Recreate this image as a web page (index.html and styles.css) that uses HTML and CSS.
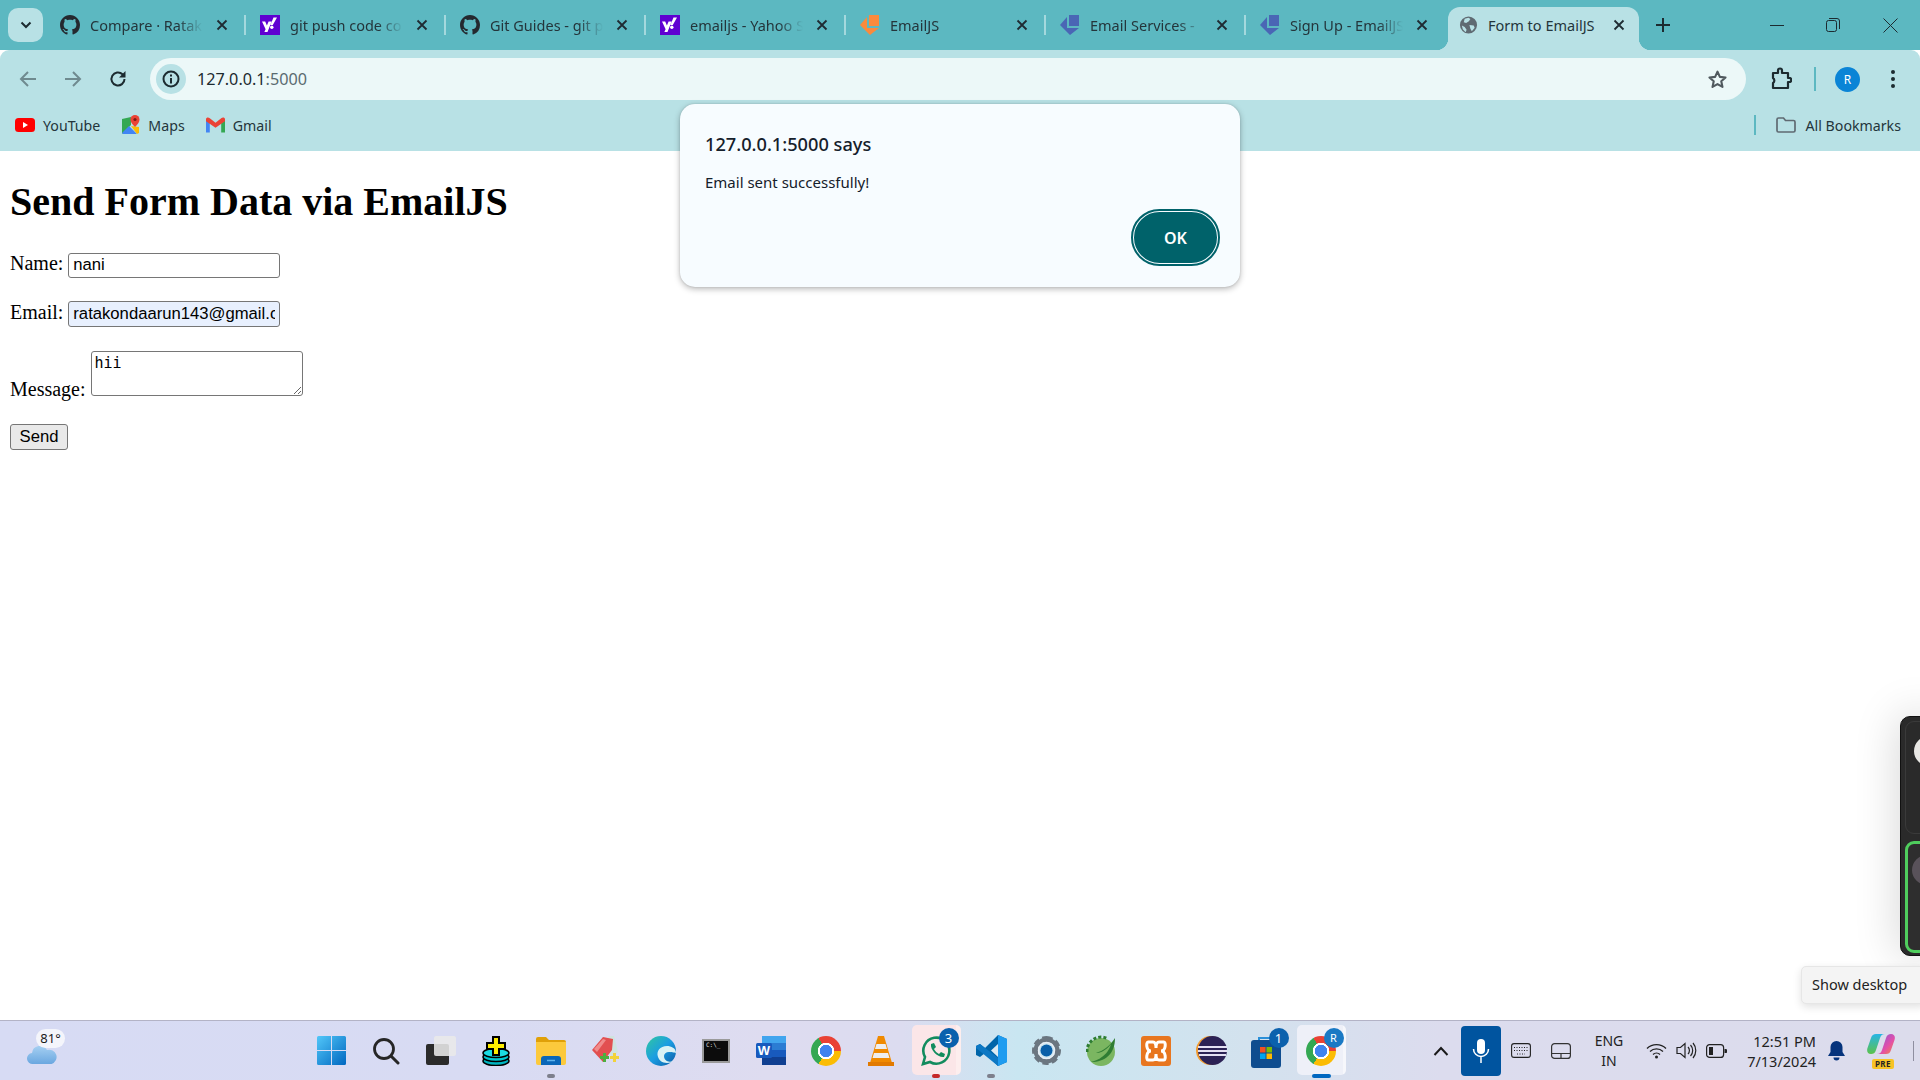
FILE: index.html
```html
<!DOCTYPE html>
<html lang="en">
<head>
    <meta charset="UTF-8">
    <title>Form to EmailJS</title>
    <link rel="stylesheet" href="styles.css">
</head>
<body>
    <svg class="defs" width="0" height="0">
        <symbol id="github" viewBox="0 0 16 16"><path fill="#24292f" d="M8 0C3.58 0 0 3.58 0 8c0 3.54 2.29 6.53 5.47 7.59.4.07.55-.17.55-.38 0-.19-.01-.82-.01-1.49-2.01.37-2.53-.49-2.69-.94-.09-.23-.48-.94-.82-1.13-.28-.15-.68-.52-.01-.53.63-.01 1.08.58 1.23.82.72 1.21 1.87.87 2.33.66.07-.52.28-.87.51-1.07-1.78-.2-3.64-.89-3.64-3.95 0-.87.31-1.59.82-2.15-.08-.2-.36-1.02.08-2.12 0 0 .67-.21 2.2.82.64-.18 1.32-.27 2-.27.68 0 1.36.09 2 .27 1.53-1.04 2.2-.82 2.2-.82.44 1.1.16 1.92.08 2.12.51.56.82 1.27.82 2.15 0 3.07-1.87 3.75-3.65 3.95.29.25.54.73.54 1.48 0 1.07-.01 1.93-.01 2.2 0 .21.15.46.55.38A8.013 8.013 0 0016 8c0-4.42-3.58-8-8-8z"/></symbol>
        <symbol id="yahoo" viewBox="0 0 20 20"><rect width="20" height="20" fill="#5f01d1"/><path fill="#fff" d="M2 6.500h3.200l1.700 4 1.700-4h3L7.500 17H4.400l1.200-2.800zM12.800 10h-2.400L13.500 2.500H17z"/><circle cx="11.800" cy="12.300" r="1.700" fill="#fff"/></symbol>
        <symbol id="emailjs" viewBox="0 0 20 20"><path d="M9 0h10v11H9z"/><path d="M7 2v11h12l-9 7-10-10z"/></symbol>
        <symbol id="close" viewBox="0 0 12 12"><path fill="none" stroke="#1f2c33" stroke-width="1.800" d="M1.500 1.500l9 9M10.500 1.500l-9 9"/></symbol>
    </svg>

    <div class="screen">
        <div class="tabstrip">
            <button class="tab-search">
                <svg width="12" height="8" viewBox="0 0 12 8"><path fill="none" stroke="#1c2b30" stroke-width="2" d="M1.500 1.500L6 6l4.500-4.500"/></svg>
            </button>
            <div class="tab">
                <svg class="favicon"><use href="#github"/></svg>
                <span class="tab-title">Compare · Ratak</span>
                <svg class="tab-close"><use href="#close"/></svg>
            </div>
            <div class="tab">
                <svg class="favicon"><use href="#yahoo"/></svg>
                <span class="tab-title">git push code co</span>
                <svg class="tab-close"><use href="#close"/></svg>
            </div>
            <div class="tab">
                <svg class="favicon"><use href="#github"/></svg>
                <span class="tab-title">Git Guides - git p</span>
                <svg class="tab-close"><use href="#close"/></svg>
            </div>
            <div class="tab">
                <svg class="favicon"><use href="#yahoo"/></svg>
                <span class="tab-title">emailjs - Yahoo S</span>
                <svg class="tab-close"><use href="#close"/></svg>
            </div>
            <div class="tab">
                <svg class="favicon ejs-orange"><use href="#emailjs"/></svg>
                <span class="tab-title">EmailJS</span>
                <svg class="tab-close"><use href="#close"/></svg>
            </div>
            <div class="tab">
                <svg class="favicon ejs-blue"><use href="#emailjs"/></svg>
                <span class="tab-title">Email Services -</span>
                <svg class="tab-close"><use href="#close"/></svg>
            </div>
            <div class="tab tab-before-active">
                <svg class="favicon ejs-blue"><use href="#emailjs"/></svg>
                <span class="tab-title">Sign Up - EmailJS</span>
                <svg class="tab-close"><use href="#close"/></svg>
            </div>
            <div class="tab tab-active">
                <svg class="favicon" viewBox="0 0 20 20"><circle cx="10" cy="10" r="9" fill="#5f6a72"/><path fill="#b8e1e5" d="M6 3.500l4-1.200 2 1.400-1.600 2.400L7.500 8 5 7zM11 10l4.500.5 1 2.500-3 3.500-1.500-2.500zM3 10.500l3 1.500 2 3-1 2.500-3-3z"/></svg>
                <span class="tab-title">Form to EmailJS</span>
                <svg class="tab-close"><use href="#close"/></svg>
            </div>
            <svg class="new-tab" width="16" height="16" viewBox="0 0 16 16"><path fill="none" stroke="#1c2b30" stroke-width="2" d="M8 1v14M1 8h14"/></svg>
            <div class="window-controls">
                <span class="win-btn"><svg width="14" height="14" viewBox="0 0 14 14"><path stroke="#1c2b30" d="M0 7.500h14"/></svg></span>
                <span class="win-btn"><svg width="14" height="14" viewBox="0 0 14 14"><rect x=".5" y="2.500" width="10" height="11" rx="2" fill="none" stroke="#1c2b30"/><path fill="none" stroke="#1c2b30" d="M3 .5h8a2.500 2.500 0 0 1 2.500 2.500v8"/></svg></span>
                <span class="win-btn win-close"><svg width="15" height="15" viewBox="0 0 15 15"><path fill="none" stroke="#1c2b30" d="M.5.5l14 14M14.500.5l-14 14"/></svg></span>
            </div>
        </div>

        <div class="toolbar">
            <span class="nav-btn"><svg width="18" height="18" viewBox="0 0 18 18"><path fill="none" stroke="#6f8a8f" stroke-width="2" d="M17 9H2M9 2L2 9l7 7"/></svg></span>
            <span class="nav-btn"><svg width="18" height="18" viewBox="0 0 18 18"><path fill="none" stroke="#6f8a8f" stroke-width="2" d="M1 9h15M9 2l7 7-7 7"/></svg></span>
            <span class="nav-btn"><svg width="18" height="18" viewBox="0 0 18 18"><path fill="none" stroke="#1c2b30" stroke-width="2" d="M15.500 9a6.500 6.500 0 1 1-2-4.700L15.500 6"/><path fill="#1c2b30" d="M16.500 1v6.500H10z"/></svg></span>
            <div class="omnibox">
                <span class="site-info"><svg width="18" height="18" viewBox="0 0 18 18"><circle cx="9" cy="9" r="7.500" fill="none" stroke="#1c2b30" stroke-width="2"/><path stroke="#1c2b30" stroke-width="2" d="M9 8v5.500M9 4.500v2"/></svg></span>
                <span class="url">127.0.0.1<span class="url-port">:5000</span></span>
                <svg class="star" width="21" height="21" viewBox="0 0 24 24"><path fill="none" stroke="#50595e" stroke-width="2.400" stroke-linejoin="round" d="M12 3l2.700 6 6.500.7-4.900 4.400 1.400 6.400L12 17.200l-5.700 3.300 1.400-6.400-4.900-4.400 6.500-.7z"/></svg>
            </div>
            <span class="tool-btn extensions"><svg width="22" height="24" viewBox="0 0 22 24"><path fill="none" stroke="#1c2b30" stroke-width="2.200" stroke-linejoin="round" d="M3 6h5V3.500a2 2 0 0 1 4 0V6h6v5h2a2.200 2.200 0 0 1 0 4h-2v6H3v-5a3 3 0 0 0 0-5z"/></svg></span>
            <span class="tool-divider"></span>
            <span class="avatar">R</span>
            <span class="tool-btn menu"><i></i><i></i><i></i></span>
        </div>

        <div class="bookmarks">
            <span class="bookmark">
                <svg width="20" height="20" viewBox="0 0 20 20"><rect y="3" width="20" height="14" rx="3.500" fill="#f00"/><path fill="#fff" d="M8 7l5 3-5 3z"/></svg>
                YouTube
            </span>
            <span class="bookmark">
                <svg width="19" height="20" viewBox="0 0 19 20"><path fill="#34a853" d="M1 4l9-2v8l-9 9z"/><path fill="#4285f4" d="M1 18l7-7 8 8H2z"/><path fill="#fbbc04" d="M10 11l6 8 2-1V12z"/><path fill="#ea4335" d="M14 0a4.500 4.500 0 0 1 4.500 4.500C18.500 8 14 12 14 12S9.500 8 9.500 4.500A4.500 4.500 0 0 1 14 0z"/><circle cx="14" cy="4.500" r="1.600" fill="#7b1c14"/></svg>
                Maps
            </span>
            <span class="bookmark">
                <svg width="19" height="16" viewBox="0 0 20 16"><path fill="#4285f4" d="M0 3v13h4V6z"/><path fill="#34a853" d="M16 6v10h4V3z"/><path fill="#ea4335" d="M0 1.500C1-.5 3 0 4 1l6 4.500L16 1c1-1 3-1.500 4 .5V4l-10 7L0 4z"/></svg>
                Gmail
            </span>
            <span class="bookmarks-end">
                <span class="bookmarks-divider"></span>
                <span class="bookmark">
                    <svg width="20" height="16" viewBox="0 0 20 16"><path fill="none" stroke="#5f6a72" stroke-width="1.700" d="M1 2.500A1.500 1.500 0 0 1 2.500 1h5l2 2.500h8A1.500 1.500 0 0 1 19 5v8.500a1.500 1.500 0 0 1-1.500 1.500h-15A1.500 1.500 0 0 1 1 13.500z"/></svg>
                    All Bookmarks
                </span>
            </span>
        </div>

        <main class="page">
            <h1>Send Form Data via EmailJS</h1>
            <form>
                <div class="form-row">
                    <label for="name">Name:</label>
                    <input id="name" type="text" value="nani">
                </div>
                <div class="form-row form-row-email">
                    <label for="email">Email:</label>
                    <input id="email" class="autofilled" type="email" value="ratakondaarun143@gmail.com">
                </div>
                <div class="form-row form-row-message">
                    <label for="message">Message:</label>
                    <textarea id="message">hii</textarea>
                </div>
                <button type="button" class="send-btn">Send</button>
            </form>
        </main>

        <div class="taskbar">
            <div class="weather">
                <svg width="30" height="22" viewBox="0 0 30 22"><defs><linearGradient id="cloud" x1="0" y1="0" x2="0" y2="1"><stop offset="0" stop-color="#a6d0f2"/><stop offset="1" stop-color="#6aa7e0"/></linearGradient></defs><path fill="url(#cloud)" d="M6 21a5.500 5.500 0 0 1-1-11A8 8 0 0 1 20 7a6 6 0 0 1 4.500 14z"/></svg>
                <span class="temp">81°</span>
            </div>
            <div class="tasklist">
                <span class="task">
                    <svg width="29" height="29" viewBox="0 0 29 29"><defs><linearGradient id="win" x1="0" y1="0" x2="1" y2="1"><stop offset="0" stop-color="#52c7f9"/><stop offset="1" stop-color="#0067c0"/></linearGradient></defs><path fill="url(#win)" d="M0 1.500A1.500 1.500 0 0 1 1.500 0H14v14H0zM15 0h12.500A1.500 1.500 0 0 1 29 1.500V14H15zM0 15h14v14H1.500A1.500 1.500 0 0 1 0 27.500zM15 15h14v12.500a1.500 1.500 0 0 1-1.500 1.500H15z"/></svg>
                </span>
                <span class="task">
                    <svg width="28" height="28" viewBox="0 0 28 28"><circle cx="12" cy="12" r="9.500" fill="none" stroke="#262626" stroke-width="2.800"/><path stroke="#262626" stroke-width="3" stroke-linecap="round" d="M19 19l7 7"/></svg>
                </span>
                <span class="task">
                    <svg width="30" height="29" viewBox="0 0 30 29"><rect y="8" width="23" height="21" rx="2" fill="#2b2b2b"/><rect x="8" width="22" height="20" rx="2" fill="#e9e9e9" fill-opacity=".88"/></svg>
                </span>
                <span class="task">
                    <svg width="28" height="30" viewBox="0 0 28 30"><ellipse cx="14" cy="25" rx="13" ry="4.500" fill="#00b5c0" stroke="#000" stroke-width="1.500"/><ellipse cx="14" cy="21" rx="13" ry="4.500" fill="#00c9d4" stroke="#000" stroke-width="1.500"/><ellipse cx="14" cy="17" rx="13" ry="4.500" fill="#1bdbe3" stroke="#000" stroke-width="1.500"/><path fill="#ffec00" stroke="#000" stroke-width="2" d="M11 1h6v6h6v6h-6v6h-6v-6H5V7h6z"/></svg>
                </span>
                <span class="task">
                    <svg width="30" height="28" viewBox="0 0 30 28"><path fill="#e0a008" d="M0 2a2 2 0 0 1 2-2h8l3 3h15a2 2 0 0 1 2 2v5H0z"/><path fill="#fcc93c" d="M0 5h30v21a2 2 0 0 1-2 2H2a2 2 0 0 1-2-2z"/><path fill="#0a66b8" d="M5 28v-6a3 3 0 0 1 3-3h14a3 3 0 0 1 3 3v6z"/><path stroke="#5db2ec" stroke-width="1.500" d="M11 23.500h8"/></svg>
                    <i class="task-dot"></i>
                </span>
                <span class="task">
                    <svg width="28" height="30" viewBox="0 0 28 30"><path fill="#cfe3df" d="M17 0h5l4 16-6 6-6-17z"/><path fill="#e24f50" d="M0 14L11 1l10 2-1 11-9 12z"/><path fill="#f08b8b" d="M2 13l9-10 3 1-9 12z"/><path fill="#4caf3e" d="M8 20h3v-3h3v3h3v3h-3v3h-3v-3H8z"/><path fill="#f2d23a" d="M18 20h3v-3h3v3h3v3h-3v3h-3v-3h-3z"/></svg>
                </span>
                <span class="task">
                    <svg width="30" height="30" viewBox="0 0 30 30"><defs><linearGradient id="edge" x1="0" y1="0" x2="1" y2="1"><stop offset="0" stop-color="#30c8a0"/><stop offset=".5" stop-color="#1b9de2"/><stop offset="1" stop-color="#0c59a4"/></linearGradient></defs><circle cx="15" cy="15" r="15" fill="url(#edge)"/><path fill="#d9f2f5" d="M30 17c0-5-5-7-9-7-7 0-11 5-9 11 1 3 4 6 9 6 3 0 5-1 6-2-5 2-9-1-9-5 0-2 2-4 5-4 3 0 7 1 7 1z"/></svg>
                </span>
                <span class="task">
                    <span class="cmd-window">C:\_</span>
                </span>
                <span class="task">
                    <svg width="30" height="29" viewBox="0 0 30 29"><rect x="6" width="24" height="29" rx="2" fill="#2b7cd3"/><rect x="6" width="24" height="7" fill="#41a5ee"/><rect x="6" y="14" width="24" height="7" fill="#185abd"/><rect x="6" y="21" width="24" height="8" fill="#103f91"/><rect y="7" width="16" height="15" rx="1.500" fill="#185abd"/><text x="8" y="19" text-anchor="middle" class="word-w">W</text></svg>
                </span>
                <span class="task"><span class="chrome"></span></span>
                <span class="task">
                    <svg width="26" height="30" viewBox="0 0 26 30"><path fill="#f08a00" d="M10 0h6l8 27H2z"/><path fill="#eee" d="M8.500 8h9l1.500 5H7zM6 17h14l1.500 5h-17z"/><path fill="#e27a00" d="M0 26h26v4H0z"/></svg>
                </span>
                <span class="task task-open task-alert">
                    <svg width="30" height="30" viewBox="0 0 30 30"><path fill="none" stroke="#128c5e" stroke-width="2.600" d="M2 28l2-7a13 13 0 1 1 5 5z"/><path fill="#128c5e" d="M10 8l3-1 2 4-2 2c1 2 3 4 5 5l2-2 4 2-1 3c-6 1-14-7-13-13z"/></svg>
                    <b class="badge">3</b>
                    <i class="task-dot dot-red"></i>
                </span>
                <span class="task">
                    <svg width="31" height="31" viewBox="0 0 31 31"><path fill="#0065a9" d="M22 0l9 4v23l-9 4-13-13-5 4-4-2V11l4-2 5 4z"/><path fill="#1f9cf0" d="M22 0l9 4v23l-9 4z"/><path fill="#dceaf2" d="M22 9l-7 6.500 7 6.500z"/><path fill="#0d78c4" d="M4 9l18 14v8L0 13v-2z"/></svg>
                    <i class="task-dot"></i>
                </span>
                <span class="task">
                    <svg width="31" height="31" viewBox="0 0 31 31"><path fill="none" stroke="#6b7680" stroke-width="6" stroke-dasharray="5.500 3" d="M15.500 4a11.500 11.500 0 1 1 0 23 11.500 11.500 0 0 1 0-23z"/><circle cx="15.500" cy="15.500" r="11" fill="none" stroke="#6b7680" stroke-width="4"/><circle cx="15.500" cy="15.500" r="6" fill="#0a5fa8"/><circle cx="15.500" cy="15.500" r="8" fill="none" stroke="#e9eef4" stroke-width="1.500"/></svg>
                </span>
                <span class="task">
                    <svg width="30" height="31" viewBox="0 0 30 31"><circle cx="15" cy="17" r="14" fill="#7bb661"/><path fill="none" stroke="#2e7d32" stroke-width="3" stroke-dasharray="3 2" d="M1 17A14 14 0 0 1 22 4"/><path fill="#2f7d33" d="M29 3c0 16-10 24-24 24 0 0 16-3 20-18-6 8-12 9-15 9 7-2 14-7 19-15z"/></svg>
                </span>
                <span class="task">
                    <svg width="30" height="30" viewBox="0 0 30 30"><rect width="30" height="30" rx="3" fill="#e8761f"/><path fill="none" stroke="#fff" stroke-width="3" d="M7 6h5c3 0 3 6 3 6s0-6 3-6h5c2 0 2 9-3 9 5 0 5 9 3 9h-5c-3 0-3-6-3-6s0 6-3 6H7c-2 0-2-9 3-9-5 0-5-9-3-9z"/></svg>
                </span>
                <span class="task">
                    <svg width="31" height="31" viewBox="0 0 31 31"><circle cx="14.500" cy="15.500" r="14.500" fill="#f29b30"/><circle cx="16.500" cy="15.500" r="14.500" fill="#2c2255"/><path stroke="#e4e0f2" stroke-width="2.200" d="M2 12h29M2 16h29M3 20h27"/></svg>
                </span>
                <span class="task">
                    <svg width="30" height="34" viewBox="0 0 30 34"><path fill="none" stroke="#2a8fd8" stroke-width="2" d="M8 8V4h14v4"/><rect y="6" width="30" height="28" rx="3" fill="#0f4d8f"/><path fill="#f25022" d="M9 13h5.500v5.500H9z"/><path fill="#7fba00" d="M15.500 13H21v5.500h-5.500z"/><path fill="#00a4ef" d="M9 19.500h5.500V25H9z"/><path fill="#ffb900" d="M15.500 19.500H21V25h-5.500z"/></svg>
                    <b class="badge">1</b>
                </span>
                <span class="task task-open">
                    <span class="chrome"></span>
                    <b class="badge badge-light">R</b>
                    <i class="task-dot dot-blue"></i>
                </span>
            </div>
            <div class="tray">
                <span class="tray-item">
                    <svg width="16" height="10" viewBox="0 0 16 10"><path fill="none" stroke="#1a1a1a" stroke-width="2" d="M1.500 9L8 2l6.500 7"/></svg>
                </span>
                <span class="mic">
                    <svg width="18" height="26" viewBox="0 0 18 26"><rect x="5" y="1" width="8" height="15" rx="4" fill="#fff"/><path fill="none" stroke="#fff" stroke-width="1.500" d="M1.500 11a7.500 7.500 0 0 0 15 0M9 18.500V25"/></svg>
                </span>
                <span class="tray-item">
                    <svg width="20" height="15" viewBox="0 0 20 15"><rect x=".6" y=".6" width="18.800" height="13.800" rx="2.500" fill="none" stroke="#222" stroke-width="1.100"/><path stroke="#222" stroke-dasharray="1 1.500" d="M3 4.500h14M3 7.500h14M6 11h8"/></svg>
                </span>
                <span class="tray-item">
                    <svg width="20" height="16" viewBox="0 0 20 16"><rect x=".6" y=".6" width="18.800" height="14.800" rx="3" fill="none" stroke="#333" stroke-width="1.200"/><path stroke="#333" stroke-width="1.200" d="M1 10.500h18M10 10.500V15"/></svg>
                </span>
                <span class="lang">ENG<br>IN</span>
                <span class="tray-item tray-status">
                    <svg width="21" height="16" viewBox="0 0 21 16"><path fill="none" stroke="#222" stroke-width="1.300" d="M1 5.500a13.500 13.500 0 0 1 19 0M4 8.500a9.500 9.500 0 0 1 13 0M7 11.500a5 5 0 0 1 7 0"/><circle cx="10.500" cy="14" r="1.500" fill="#222"/></svg>
                </span>
                <span class="tray-item tray-status">
                    <svg width="21" height="17" viewBox="0 0 21 17"><path fill="none" stroke="#222" stroke-width="1.200" d="M1 5.500h3.500L9 1.500v14l-4.500-4H1zM12 5a5 5 0 0 1 0 7M14.500 3a8 8 0 0 1 0 11M17 1a11.500 11.500 0 0 1 0 15"/></svg>
                </span>
                <span class="tray-item tray-status">
                    <svg width="21" height="14" viewBox="0 0 21 14"><rect x=".6" y=".6" width="17" height="12.800" rx="3" fill="none" stroke="#222" stroke-width="1.200"/><rect x="3" y="3" width="4" height="8" fill="#222"/><path fill="#222" d="M18.500 5h1a1.500 1.500 0 0 1 0 4h-1z"/></svg>
                </span>
                <span class="clock">12:51 PM<br>7/13/2024</span>
                <span class="tray-item bell">
                    <svg width="17" height="20" viewBox="0 0 17 20"><path fill="#05337c" d="M8.500 0a6 6 0 0 1 6 6v5l2.500 4H0l2.500-4V6a6 6 0 0 1 6-6zM5.500 16.500h6a3 3 0 0 1-6 0z"/></svg>
                </span>
                <span class="copilot">
                    <svg width="28" height="24" viewBox="0 0 28 24"><defs><linearGradient id="copilot-l" x1="0" y1="0" x2="0" y2="1"><stop offset="0" stop-color="#27b5e6"/><stop offset="1" stop-color="#5cc24a"/></linearGradient><linearGradient id="copilot-r" x1="0" y1="0" x2="1" y2="1"><stop offset="0" stop-color="#7a5be0"/><stop offset=".6" stop-color="#e34fa8"/><stop offset="1" stop-color="#f28a3c"/></linearGradient></defs><path fill="url(#copilot-l)" d="M9 0h9c-3 0-4 1.500-5 4l-4 12c-1 3-2.500 4-5 4-3.500 0-4.500-3-3.500-6L4 4c1-3 2.500-4 5-4z"/><path fill="url(#copilot-r)" d="M19 20h-9c3 0 4-1.500 5-4l4-12c1-3 2.500-4 5-4 3.500 0 4.500 3 3.500 6L24 16c-1 3-2.500 4-5 4z"/></svg>
                    <b class="pre">PRE</b>
                </span>
                <span class="tray-divider"></span>
            </div>
        </div>

        <!-- JS alert box, sits over toolbar and page -->
        <div class="alert-box">
            <h2>127.0.0.1:5000 says</h2>
            <p>Email sent successfully!</p>
            <div class="alert-actions">
                <button type="button" class="ok-btn">OK</button>
            </div>
        </div>

        <!-- meeting window peeking in from the right edge -->
        <div class="call-panel">
            <div class="call-tile"><span class="call-face"></span></div>
            <div class="call-tile call-tile-active"><span class="call-face call-face-dark"></span></div>
        </div>
        <div class="desktop-tip">Show desktop</div>
    </div>
</body>
</html>
```

FILE: styles.css
```css
* {
    box-sizing: border-box;
}

html, body {
    margin: 0;
    padding: 0;
    height: 100%;
    overflow: hidden;
}

body {
    font-family: "Noto Sans", "Open Sans", sans-serif;
    color: #1f2c33;
}

.defs {
    position: absolute;
}

.screen {
    position: relative;
    display: flex;
    flex-direction: column;
    width: 1920px;
    height: 1080px;
    overflow: hidden;
    background: #fff;
}

/* tab strip */
.tabstrip {
    display: flex;
    align-items: center;
    height: 50px;
    padding-left: 8px;
    background: #5cb8c1;
}

.tab-search {
    display: flex;
    align-items: center;
    justify-content: center;
    flex: none;
    width: 35px;
    height: 34px;
    margin-right: 3px;
    border: none;
    border-radius: 10px;
    background: #b8e1e5;
}

.tab {
    position: relative;
    display: flex;
    align-items: center;
    flex: none;
    width: 200px;
    height: 50px;
    padding-left: 14px;
}

.tab::after {
    content: "";
    position: absolute;
    right: 0;
    top: 15px;
    width: 2px;
    height: 20px;
    background: #a4d8dd;
}

.tab-before-active::after,
.tab-active::after {
    display: none;
}

.favicon {
    flex: none;
    width: 20px;
    height: 20px;
    margin-right: 10px;
}

.ejs-orange {
    fill: #fb8a3c;
}

.ejs-blue {
    fill: #4a66b5;
}

.tab-title {
    flex: none;
    width: 113px;
    overflow: hidden;
    white-space: nowrap;
    font-size: 14.500px;
    color: #24353b;
    -webkit-mask-image: linear-gradient(90deg, #000 78%, transparent 100%);
    mask-image: linear-gradient(90deg, #000 78%, transparent 100%);
}

.tab-close {
    flex: none;
    width: 12px;
    height: 12px;
    margin-left: 13px;
}

.tab-active {
    width: 191px;
    height: 43px;
    margin: 7px 0 0 2px;
    padding: 0 0 7px 11px;
    border-radius: 12px 12px 0 0;
    background: #b8e1e5;
}

.tab-active::before {
    content: "";
    position: absolute;
    left: -12px;
    right: -12px;
    bottom: 0;
    height: 12px;
    background:
        radial-gradient(circle at 0 0, #5cb8c1 12px, #b8e1e5 12.500px) left / 12px 12px no-repeat,
        radial-gradient(circle at 100% 0, #5cb8c1 12px, #b8e1e5 12.500px) right / 12px 12px no-repeat;
}

.tab-active .favicon {
    width: 19px;
    margin-right: 10px;
}

.tab-active .tab-title {
    width: 120px;
    -webkit-mask-image: none;
    mask-image: none;
}

.tab-active .tab-close {
    margin-left: 5px;
}

.new-tab {
    flex: none;
    margin-left: 16px;
}

.window-controls {
    display: flex;
    margin-left: auto;
}

.win-btn {
    display: flex;
    align-items: center;
    justify-content: center;
    width: 56px;
    height: 40px;
}

.win-close {
    width: 59px;
}

/* toolbar */
.toolbar {
    display: flex;
    align-items: center;
    height: 50px;
    padding: 8px 0 0 5px;
    border-radius: 9px 9px 0 0;
    background: #b8e1e5;
}

.nav-btn {
    display: flex;
    align-items: center;
    justify-content: center;
    flex: none;
    width: 45px;
    height: 42px;
}

.omnibox {
    display: flex;
    align-items: center;
    flex: none;
    width: 1596px;
    height: 42px;
    margin-left: 10px;
    padding: 0 18px 0 6px;
    border-radius: 21px;
    background: #ecf8f8;
}

.site-info {
    display: flex;
    align-items: center;
    justify-content: center;
    flex: none;
    width: 30px;
    height: 30px;
    border-radius: 50%;
    background: #b8e1e5;
}

.url {
    margin-left: 11px;
    font-size: 16.200px;
    color: #1c2b30;
}

.url-port {
    color: #5a6b70;
}

.star {
    margin-left: auto;
}

.tool-btn {
    display: flex;
    align-items: center;
    justify-content: center;
    flex: none;
}

.extensions {
    width: 70px;
}

.tool-divider {
    flex: none;
    width: 2px;
    height: 24px;
    margin: 0 19px 0 -2px;
    background: #5cb8c1;
}

.avatar {
    display: flex;
    align-items: center;
    justify-content: center;
    flex: none;
    width: 25px;
    height: 25px;
    border-radius: 50%;
    background: #0a84d6;
    color: #fff;
    font-size: 12px;
}

.menu {
    flex-direction: column;
    gap: 3px;
    width: 40px;
    margin-left: 13px;
}

.menu i {
    width: 4px;
    height: 4px;
    border-radius: 50%;
    background: #1c2b30;
}

/* bookmarks bar */
.bookmarks {
    display: flex;
    align-items: center;
    height: 51px;
    padding: 0 19px 1px 15px;
    background: #b8e1e5;
    font-size: 14.200px;
    color: #24353b;
}

.bookmark {
    display: flex;
    align-items: center;
    gap: 8px;
    margin-right: 21px;
    white-space: nowrap;
}

.bookmarks-end {
    display: flex;
    align-items: center;
    margin-left: auto;
}

.bookmarks-end .bookmark {
    gap: 10px;
    margin-right: 0;
}

.bookmarks-divider {
    width: 2px;
    height: 20px;
    margin-right: 20px;
    background: #5cb8c1;
}

/* page content, zoomed 125% like the capture */
.page {
    flex: 1;
    padding: 0 10px;
    font-family: "Liberation Serif", serif;
    font-size: 20px;
    color: #000;
}

.page h1 {
    margin: 28px 0 27px;
    font-size: 40px;
    line-height: 46px;
    font-weight: bold;
}

.form-row {
    margin-bottom: 23px;
}

.form-row-email {
    margin-bottom: 24px;
}

.form-row input,
.form-row textarea {
    box-sizing: border-box;
    width: 212px;
    border: 1px solid #767676;
    border-radius: 3px;
    background: #fff;
    color: #000;
}

.form-row input {
    height: 25px;
    padding: 1px 4px;
    font-family: "Liberation Sans", sans-serif;
    font-size: 16.670px;
}

.form-row .autofilled {
    height: 26px;
    background: #e8f0fe;
}

.form-row textarea {
    height: 45px;
    padding: 2px 3px;
    font-family: "DejaVu Sans Mono", monospace;
    font-size: 15px;
    resize: both;
}

.form-row-message {
    margin-bottom: 23px;
}

.send-btn {
    display: block;
    width: 58px;
    height: 26px;
    padding: 0;
    border: 1px solid #767676;
    border-radius: 3px;
    background: #e9e9e9;
    font-family: "Liberation Sans", sans-serif;
    font-size: 16.670px;
    color: #000;
}

/* windows taskbar */
.taskbar {
    display: flex;
    align-items: center;
    flex: none;
    height: 60px;
    border-top: 1px solid #b3b3c6;
    background: linear-gradient(90deg, #d7dbf4 0%, #d8dbf3 25%, #dedcf0 40%, #dcdcf0 47%, #c9e6f1 53%, #d3e2ee 65%, #dcdcee 75%, #dcdcec 100%);
}

.weather {
    position: relative;
    flex: none;
    width: 303.500px;
    height: 59px;
}

.weather svg {
    position: absolute;
    left: 27px;
    top: 22px;
}

.temp {
    position: absolute;
    left: 36px;
    top: 8px;
    width: 29px;
    height: 19px;
    border-radius: 10px;
    background: #f4f5fb;
    text-align: center;
    font-size: 13px;
    line-height: 19px;
    color: #1a1a1a;
}

.tasklist {
    display: flex;
    flex: none;
}

.task {
    position: relative;
    display: flex;
    align-items: center;
    justify-content: center;
    flex: none;
    width: 55px;
    height: 59px;
}

.task-open::before {
    content: "";
    position: absolute;
    left: 3px;
    right: 3px;
    top: 4px;
    bottom: 5px;
    border-radius: 5px;
    background: linear-gradient(90deg, #eef0f8 94%, #f6f7fb 94%);
}

.task-alert::before {
    background: linear-gradient(90deg, #fbe6e8 90%, #fdeeee 90%);
}

.task > svg,
.task > .chrome {
    position: relative;
}

.task-dot {
    position: absolute;
    left: 50%;
    bottom: 2px;
    width: 8px;
    height: 4px;
    margin-left: -4px;
    border-radius: 2px;
    background: #7d7f8c;
}

.dot-red {
    background: #c62828;
}

.dot-blue {
    width: 19px;
    margin-left: -9px;
    background: #0067c0;
}

.badge {
    position: absolute;
    left: 30px;
    top: 7px;
    width: 20px;
    height: 20px;
    border-radius: 50%;
    background: #0b61ad;
    text-align: center;
    font-size: 13px;
    font-weight: normal;
    line-height: 20px;
    color: #fff;
}

.badge-light {
    background: #1a79c4;
    font-size: 11px;
}

.cmd-window {
    width: 28px;
    height: 24px;
    padding: 0 2px;
    border: 2px solid #9a9a9a;
    background: #0c0c0c;
    font-family: "DejaVu Sans Mono", monospace;
    font-size: 6px;
    line-height: 8px;
    color: #ddd;
}

.word-w {
    font-family: "Liberation Sans", sans-serif;
    font-size: 13px;
    font-weight: bold;
    fill: #fff;
}

.chrome {
    flex: none;
    width: 30px;
    height: 30px;
    border-radius: 50%;
    background:
        radial-gradient(circle, #3f83ee 0 6px, #fff 6.500px 8px, transparent 8.500px),
        conic-gradient(from -30deg, #e94235 0 120deg, #fbbc04 120deg 240deg, #34a853 240deg 360deg);
}

/* tray */
.tray {
    display: flex;
    align-items: center;
    margin-left: auto;
    margin-right: 6px;
}

.tray-item {
    display: flex;
    align-items: center;
    justify-content: center;
    flex: none;
    width: 40px;
    height: 50px;
}

.mic {
    display: flex;
    align-items: center;
    justify-content: center;
    flex: none;
    width: 40px;
    height: 50px;
    border-radius: 4px;
    background: #00549f;
}

.lang {
    flex: none;
    width: 56px;
    margin-right: 4px;
    text-align: center;
    font-size: 14px;
    line-height: 20px;
    color: #222;
}

.tray-status {
    width: 30px;
}

.clock {
    flex: none;
    width: 85px;
    text-align: right;
    font-size: 14.500px;
    line-height: 20px;
    color: #222;
}

.bell {
    width: 40px;
}

.copilot {
    position: relative;
    display: flex;
    justify-content: center;
    flex: none;
    width: 50px;
    height: 34px;
}

.pre {
    position: absolute;
    left: 16px;
    bottom: -1px;
    width: 22px;
    height: 10px;
    border-radius: 2px;
    background: #f7c325;
    text-align: center;
    font-size: 8px;
    line-height: 10px;
    letter-spacing: .5px;
    color: #222;
}

.tray-divider {
    flex: none;
    width: 1px;
    height: 20px;
    margin-left: 7px;
    background: #8f8fa0;
}

/* alert box */
.alert-box {
    position: absolute;
    left: 680px;
    top: 104px;
    width: 560px;
    height: 183px;
    padding: 28px 25px 0;
    border-radius: 15px;
    background: #f7fcff;
    box-shadow: 0 2px 6px rgba(0, 0, 0, .28), 0 0 2px rgba(0, 0, 0, .15);
}

.alert-box h2 {
    margin: 0;
    font-size: 18.200px;
    font-weight: 500;
    line-height: 24px;
    color: #15202b;
}

.alert-box p {
    margin: 16px 0 0;
    font-size: 15px;
    line-height: 20px;
    color: #15202b;
}

.alert-actions {
    position: absolute;
    right: 20px;
    bottom: 21px;
}

.ok-btn {
    display: block;
    width: 89px;
    height: 57px;
    border: 3px solid #f7fcff;
    border-radius: 29px;
    outline: 2px solid #00626a;
    outline-offset: -2px;
    background: #00626a;
    font-family: "Noto Sans", sans-serif;
    font-size: 16px;
    font-weight: 600;
    color: #fff;
}

/* meeting window at the edge */
.call-panel {
    position: absolute;
    left: 1900px;
    top: 716px;
    width: 40px;
    height: 240px;
    padding: 4px;
    border: 1px solid #111;
    border-radius: 10px;
    background: #2a2a2a;
    box-shadow: 0 0 45px rgba(0, 0, 0, .18);
}

.call-tile {
    position: relative;
    height: 113px;
    margin-bottom: 7px;
    border: 1px solid #3a3a3a;
    border-radius: 9px;
    overflow: hidden;
}

.call-tile-active {
    height: 112px;
    margin-bottom: 0;
    border: 3px solid #4fce5d;
    background: #2e2e2e;
}

.call-face {
    position: absolute;
    left: 8px;
    top: 14px;
    width: 30px;
    height: 30px;
    border-radius: 50%;
    background: #e9e7e4;
}

.call-face-dark {
    left: 4px;
    top: 11px;
    background: #59525a;
}

.desktop-tip {
    position: absolute;
    left: 1801px;
    top: 966px;
    width: 125px;
    height: 38px;
    padding-left: 10px;
    border: 1px solid #e6e6e6;
    border-radius: 5px;
    background: #f4f4f4;
    box-shadow: 0 3px 8px rgba(0, 0, 0, .12);
    font-size: 14.500px;
    line-height: 34px;
    color: #222;
}
```
